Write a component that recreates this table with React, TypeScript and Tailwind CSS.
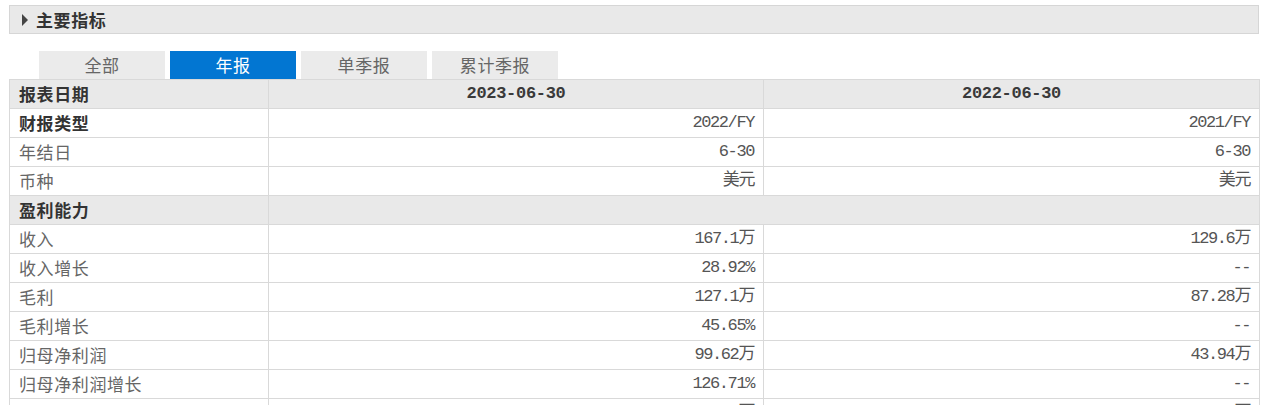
import React from "react";

type Row = {
  label: string;
  a: string;
  b: string;
  kind?: "head" | "bold" | "section";
};

const rows: Row[] = [
  { label: "报表日期", a: "2023-06-30", b: "2022-06-30", kind: "head" },
  { label: "财报类型", a: "2022/FY", b: "2021/FY", kind: "bold" },
  { label: "年结日", a: "6-30", b: "6-30" },
  { label: "币种", a: "美元", b: "美元" },
  { label: "盈利能力", a: "", b: "", kind: "section" },
  { label: "收入", a: "167.1万", b: "129.6万" },
  { label: "收入增长", a: "28.92%", b: "--" },
  { label: "毛利", a: "127.1万", b: "87.28万" },
  { label: "毛利增长", a: "45.65%", b: "--" },
  { label: "归母净利润", a: "99.62万", b: "43.94万" },
  { label: "归母净利润增长", a: "126.71%", b: "--" },
  { label: "扣非净利润", a: "99.62万", b: "43.94万" },
  { label: "扣非净利润增长", a: "126.71%", b: "--" },
];

const tabs = ["全部", "年报", "单季报", "累计季报"];

const cjk = "font-['Microsoft_YaHei','Noto_Sans_CJK_SC',sans-serif]";
const mono = "font-['Liberation_Mono','Noto_Sans_CJK_SC',monospace]";

const headCell = "justify-center font-bold text-[#3a3a3a] text-[17px] tracking-[-0.3px]";
const valCell = "justify-end pr-[9px] text-[#555] text-[17px] tracking-[-1.4px]";

export default function App() {
  return (
    <div className={`w-[1267px] h-[405px] overflow-hidden bg-white ${cjk}`}>
      <div className="ml-[9px] mt-[5px] w-[1250px] h-[29px] bg-[#e9e9e9] border border-[#d6d6d6] flex items-center pl-[12px]">
        <span className="w-0 h-0 border-l-[6px] border-l-[#444] border-y-[6px] border-y-transparent mr-[8px]" />
        <span className="text-[17px] font-bold text-[#333] tracking-[0.6px] leading-none">主要指标</span>
      </div>

      <div className="ml-[39px] mt-[17px] flex gap-[5px]">
        {tabs.map((t, i) => (
          <div
            key={t}
            className={`w-[126px] h-[28px] flex items-center justify-center text-[17px] tracking-[0.6px] ${
              i === 1 ? "bg-[#0276d2] text-white" : "bg-[#ebebeb] text-[#666]"
            }`}
          >
            {t}
          </div>
        ))}
      </div>

      <div className="ml-[9px] w-[1251px] border-t border-x border-[#d9d9d9]">
        {rows.map((r) => {
          const grey = r.kind === "head" || r.kind === "section";
          return (
            <div
              key={r.label}
              className={`flex h-[29px] border-b border-[#d9d9d9] ${grey ? "bg-[#e9e9e9]" : "bg-white"}`}
            >
              <div
                className={`w-[259px] shrink-0 border-r border-[#d9d9d9] flex items-center pl-[9px] text-[17px] tracking-[0.6px] ${
                  r.kind ? "font-bold text-[#333]" : "text-[#666]"
                }`}
              >
                {r.label}
              </div>
              {r.kind === "section" ? (
                <div className="flex-1" />
              ) : (
                <>
                  <div
                    className={`w-[495px] shrink-0 border-r border-[#d9d9d9] flex items-center ${mono} ${
                      r.kind === "head" ? headCell : valCell
                    }`}
                  >
                    {r.a}
                  </div>
                  <div className={`flex-1 flex items-center ${mono} ${r.kind === "head" ? headCell : valCell}`}>
                    {r.b}
                  </div>
                </>
              )}
            </div>
          );
        })}
      </div>
    </div>
  );
}
